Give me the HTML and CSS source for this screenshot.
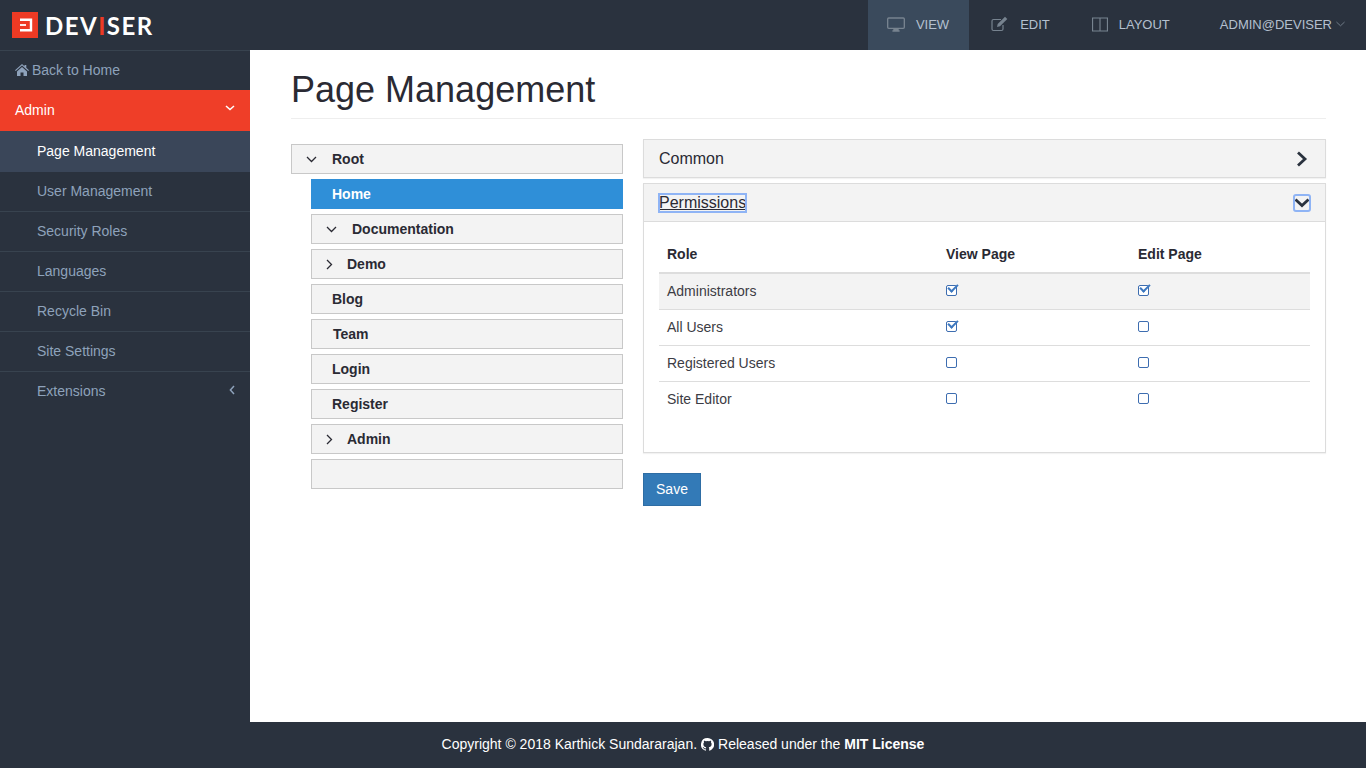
FILE: index.html
```html
<!DOCTYPE html>
<html lang="en">
<head>
  <meta charset="UTF-8" />
  <meta name="viewport" content="width=device-width, initial-scale=1.0"/>
  <title>Page Management</title>
  <link rel="stylesheet" href="styles.css">
</head>
<body>

  <!-- Top bar -->
  <header class="topbar">
    <a class="brand" href="#">
      <svg class="brand-mark" width="26" height="26" viewBox="0 0 26 26">
        <rect width="26" height="26" fill="#ee3a24"/>
        <path d="M8 7.700h11v10.600H8" fill="none" stroke="#fff" stroke-width="2.400"/>
        <path d="M8 13h6" fill="none" stroke="#fff" stroke-width="1.800"/>
      </svg>
      <span class="brand-name">DEV<span class="brand-i">I</span>SER</span>
    </a>
    <nav class="modes">
      <a class="mode active" href="#">
        <svg width="18" height="15" viewBox="0 0 20 16"><path d="M2 0h16a2 2 0 0 1 2 2v9a2 2 0 0 1-2 2h-5v1.500h1V16H6v-1.500h1V13H2a2 2 0 0 1-2-2V2a2 2 0 0 1 2-2zm0 1.500a.5.5 0 0 0-.5.5v9a.5.5 0 0 0 .5.5h16a.5.5 0 0 0 .5-.5V2a.5.5 0 0 0-.5-.5z" fill="#77838f"/></svg>
        VIEW
      </a>
      <a class="mode" href="#">
        <svg width="18" height="16" viewBox="0 0 18 16"><path d="M12 9v4a1.500 1.500 0 0 1-1.500 1.500h-8A1.500 1.500 0 0 1 1 13V5a1.500 1.500 0 0 1 1.500-1.500H10" fill="none" stroke="#77838f" stroke-width="1.200"/><path d="M6 11l.7-3L14 .8l2.300 2.300L9 10.300z" fill="#77838f"/></svg>
        EDIT
      </a>
      <a class="mode" href="#">
        <svg width="16" height="15" viewBox="0 0 17 15"><path d="M.6.6h15.800v13.800H.6zM8.500.6v13.800" fill="none" stroke="#77838f" stroke-width="1.200"/></svg>
        LAYOUT
      </a>
      <a class="user" href="#">
        ADMIN@DEVISER
        <svg width="9" height="6" viewBox="0 0 10 6"><path d="M.5.8L5 5l4.500-4.200" fill="none" stroke="#77838f" stroke-width="1"/></svg>
      </a>
    </nav>
  </header>

  <div class="middle">
    <!-- Sidebar -->
    <aside class="sidebar">
      <a class="back" href="#">
        <svg width="14" height="12" viewBox="0 0 14 12"><path d="M7 0l2.500 2.200V1h1.800v2.800L14 6.200l-.8.8L7 1.600.8 7 0 6.200zM2 7.400L7 3l5 4.400V12H8.500V8.500h-3V12H2z" fill="#8ea2bb"/></svg>
        Back to Home
      </a>
      <a class="admin" href="#">
        Admin
        <svg width="10" height="6" viewBox="0 0 10 6"><path d="M1 1l4 3.600L9 1" fill="none" stroke="#fff" stroke-width="1.500"/></svg>
      </a>
      <ul class="side-menu">
        <li class="side-item current"><a href="#">Page Management</a></li>
        <li class="side-item"><a href="#">User Management</a></li>
        <li class="side-item"><a href="#">Security Roles</a></li>
        <li class="side-item"><a href="#">Languages</a></li>
        <li class="side-item"><a href="#">Recycle Bin</a></li>
        <li class="side-item"><a href="#">Site Settings</a></li>
        <li class="side-item last">
          <a href="#">Extensions
            <svg width="6" height="10" viewBox="0 0 6 10"><path d="M5 1L1.400 5 5 9" fill="none" stroke="#8ea2bb" stroke-width="1.500"/></svg>
          </a>
        </li>
      </ul>
    </aside>

    <!-- Main content -->
    <main class="content">
      <h1 class="page-title">Page Management</h1>

      <div class="columns">
        <div class="tree">
          <div class="node">
            <svg class="caret caret-down" width="11" height="7" viewBox="0 0 11 7"><path d="M1 1l4.500 4.500L10 1" /></svg>
            <span>Root</span>
          </div>
          <div class="children">
            <div class="node selected"><span class="plain">Home</span></div>
            <div class="node">
              <svg class="caret caret-down" width="11" height="7" viewBox="0 0 11 7"><path d="M1 1l4.500 4.500L10 1" /></svg>
              <span>Documentation</span>
            </div>
            <div class="node">
              <svg class="caret caret-right" width="7" height="11" viewBox="0 0 7 11"><path d="M1 1l4.500 4.500L1 10" /></svg>
              <span>Demo</span>
            </div>
            <div class="node"><span class="plain">Blog</span></div>
            <div class="node"><span class="plain team">Team</span></div>
            <div class="node"><span class="plain">Login</span></div>
            <div class="node"><span class="plain">Register</span></div>
            <div class="node">
              <svg class="caret caret-right" width="7" height="11" viewBox="0 0 7 11"><path d="M1 1l4.500 4.500L1 10" /></svg>
              <span>Admin</span>
            </div>
            <div class="node"></div>
          </div>
        </div>

        <div class="details">
          <section class="panel">
            <div class="panel-head">
              <a class="panel-title" href="#">Common</a>
              <span class="panel-toggle">
                <svg width="12" height="16" viewBox="0 0 12 16"><path d="M2 1.500L9 8l-7 6.500" fill="none" stroke="#2a323e" stroke-width="2.800"/></svg>
              </span>
            </div>
          </section>

          <section class="panel">
            <div class="panel-head">
              <a class="panel-title focused" href="#">Permissions</a>
              <span class="panel-toggle focused">
                <svg width="16" height="10" viewBox="0 0 16 10"><path d="M1.500 1.500L8 7.500l6.500-6" fill="none" stroke="#2a323e" stroke-width="2.800"/></svg>
              </span>
            </div>
            <div class="panel-body">
              <table class="roles">
                <thead>
                  <tr><th class="col-role">Role</th><th class="col-view">View Page</th><th>Edit Page</th></tr>
                </thead>
                <tbody>
                  <tr class="odd">
                    <td>Administrators</td>
                    <td><span class="check on"></span></td>
                    <td><span class="check on"></span></td>
                  </tr>
                  <tr>
                    <td>All Users</td>
                    <td><span class="check on"></span></td>
                    <td><span class="check"></span></td>
                  </tr>
                  <tr>
                    <td>Registered Users</td>
                    <td><span class="check"></span></td>
                    <td><span class="check"></span></td>
                  </tr>
                  <tr>
                    <td>Site Editor</td>
                    <td><span class="check"></span></td>
                    <td><span class="check"></span></td>
                  </tr>
                </tbody>
              </table>
            </div>
          </section>

          <button class="save">Save</button>
        </div>
      </div>
    </main>
  </div>

  <footer class="footer">
    Copyright © 2018 Karthick Sundararajan.
    <svg class="github" width="13" height="13" viewBox="0 0 16 16"><path d="M8 0a8 8 0 0 0-2.500 15.600c.4.100.5-.2.500-.4v-1.400c-2.200.5-2.700-1-2.700-1-.4-.9-.9-1.200-.9-1.200-.7-.5.100-.5.100-.5.800.1 1.200.8 1.200.8.700 1.200 1.900.9 2.300.7.100-.5.300-.9.500-1.100-1.800-.2-3.600-.9-3.600-4 0-.9.300-1.600.8-2.100-.1-.2-.4-1 .1-2.100 0 0 .7-.2 2.200.8a7.600 7.600 0 0 1 4 0c1.500-1 2.200-.8 2.200-.8.500 1.100.2 1.900.1 2.100.5.500.8 1.200.8 2.100 0 3.100-1.900 3.800-3.600 4 .3.200.6.700.6 1.500v2.200c0 .2.100.5.600.4A8 8 0 0 0 8 0z" fill="#fff"/></svg>
    Released under the <a href="#">MIT License</a>
  </footer>

</body>
</html>
```

FILE: styles.css
```css
html, body {
  height: 100%;
  margin: 0;
  padding: 0;
}

body {
  display: flex;
  flex-direction: column;
  background-color: #ffffff;
  color: #2a2a33;
  font-family: "Liberation Sans", Arial, sans-serif;
  font-size: 14px;
}

a {
  color: inherit;
  text-decoration: none;
}

/* Top bar */
.topbar {
  flex: 0 0 50px;
  display: flex;
  justify-content: space-between;
  background-color: #2a323e;
}

.brand {
  display: flex;
  align-items: center;
  padding-left: 12px;
}

.brand-mark {
  display: block;
}

.brand-name {
  margin-left: 7px;
  color: #ffffff;
  font-family: Lato, sans-serif;
  font-size: 24px;
  font-weight: 700;
  letter-spacing: 1.5px;
}

.brand-i {
  color: #ee3a24;
}

.modes {
  display: flex;
  height: 50px;
  color: #b4c0cf;
  font-size: 13px;
}

.mode {
  display: flex;
  align-items: center;
  gap: 11px;
  padding: 0 20px 2px 19px;
}

.mode:nth-child(2) {
  padding: 0 21px 2px 22px;
}

.mode:nth-child(3) {
  padding: 0 25px 2px 21px;
}

.mode.active {
  background-color: #3a4a5c;
}

.user {
  display: flex;
  align-items: center;
  gap: 4px;
  padding: 0 21px 2px 25px;
}

/* Sidebar */
.middle {
  flex: 1;
  display: flex;
  min-height: 0;
}

.sidebar {
  flex: 0 0 250px;
  background-color: #2a323e;
  color: #8ea2bb;
}

.back {
  display: flex;
  align-items: center;
  gap: 3px;
  height: 37px;
  padding: 0 0 2px 15px;
  border-top: 1px solid #38434f;
}

.admin {
  display: flex;
  justify-content: space-between;
  align-items: center;
  height: 39px;
  padding: 0 15px 2px 15px;
  background-color: #ef3e28;
  color: #ffffff;
}

.admin svg {
  margin-bottom: 3px;
}

.side-menu {
  list-style: none;
  margin: 0;
  padding: 0;
}

.side-item {
  border-bottom: 1px solid #38434f;
}

.side-item a {
  display: flex;
  justify-content: space-between;
  align-items: center;
  height: 37px;
  padding: 0 15px 2px 37px;
}

.side-item.current {
  border-bottom: none;
  background-color: #3a4659;
  color: #ffffff;
}

.side-item.current a {
  height: 39px;
}

.side-item.last {
  border-bottom: none;
}

.side-item.last svg {
  margin-bottom: 2px;
}

/* Main content */
.content {
  flex: 1;
  padding: 0 40px 0 41px;
}

.page-title {
  margin: 0 0 20px 0;
  padding: 20px 0 8px 0;
  height: 40px;
  border-bottom: 1px solid #eeeeee;
  font-size: 36px;
  font-weight: 400;
  line-height: 40px;
}

.columns {
  display: flex;
  gap: 20px;
}

/* Page tree */
.tree {
  flex: 0 0 332px;
  padding-top: 5px;
}

.children {
  margin-left: 20px;
}

.node {
  display: flex;
  align-items: center;
  box-sizing: border-box;
  height: 30px;
  margin-bottom: 5px;
  padding-left: 14px;
  border: 1px solid #c8c8c8;
  background-color: #f3f3f3;
  font-weight: 700;
}

.node.selected {
  border-color: #2f8fd8;
  background-color: #2f8fd8;
  color: #ffffff;
}

.node .plain {
  margin-left: 6px;
}

.node .plain.team {
  margin-left: 7px;
}

.caret {
  fill: none;
  stroke: #2a2a33;
  stroke-width: 1.300;
}

.caret-down {
  margin-right: 15px;
}

.caret-right {
  margin-right: 14px;
}

/* Right side panels */
.details {
  flex: 1;
}

.panel {
  margin-bottom: 5px;
  border: 1px solid #dcdcdc;
  box-shadow: 0 1px 1px rgba(0, 0, 0, 0.05);
}

.panel-head {
  display: flex;
  justify-content: space-between;
  align-items: center;
  height: 37px;
  padding: 0 15px;
  background-color: #f3f3f3;
}

.panel-title {
  font-size: 16px;
}

.panel-title.focused {
  text-decoration: underline;
  outline: 2px solid #8fb4f5;
  outline-offset: -1px;
}

.panel-toggle {
  display: flex;
  justify-content: center;
  align-items: center;
  width: 16px;
  height: 16px;
}

.panel-toggle.focused {
  outline: 2px solid #8fb4f5;
  outline-offset: -1px;
  border-radius: 2px;
}

.panel-body {
  padding: 15px 15px 35px 15px;
  border-top: 1px solid #dcdcdc;
}

.roles {
  width: 100%;
  border-collapse: collapse;
}

.roles th {
  height: 33px;
  padding: 0 8px 2px 8px;
  border-bottom: 2px solid #dddddd;
  text-align: left;
}

.col-role {
  width: 263px;
}

.col-view {
  width: 176px;
}

.roles td {
  height: 33px;
  padding: 0 8px 2px 8px;
  border-bottom: 1px solid #dddddd;
  color: #3c3c44;
}

.roles tr:last-child td {
  border-bottom: none;
}

.roles tr.odd td {
  background-color: #f3f3f3;
}

.check {
  position: relative;
  display: block;
  box-sizing: border-box;
  width: 11px;
  height: 11px;
  border: 1px solid #3d6db0;
  border-radius: 2px;
  background-color: #ffffff;
}

.check.on::after {
  content: "";
  position: absolute;
  left: 1px;
  top: -2px;
  width: 8px;
  height: 4px;
  border-left: 2px solid #3d78c0;
  border-bottom: 2px solid #3d78c0;
  transform: rotate(-45deg);
}

.save {
  display: block;
  width: 58px;
  height: 33px;
  margin-top: 20px;
  padding: 0 0 2px 0;
  border: 1px solid #2e6da4;
  background-color: #337ab7;
  color: #ffffff;
  font-family: inherit;
  font-size: 14px;
}

/* Footer */
.footer {
  flex: 0 0 46px;
  box-sizing: border-box;
  display: flex;
  justify-content: center;
  align-items: center;
  gap: 4px;
  padding-bottom: 2px;
  background-color: #2a323e;
  color: #ffffff;
}

.footer a {
  font-weight: 700;
}

.github {
  display: block;
}
```
